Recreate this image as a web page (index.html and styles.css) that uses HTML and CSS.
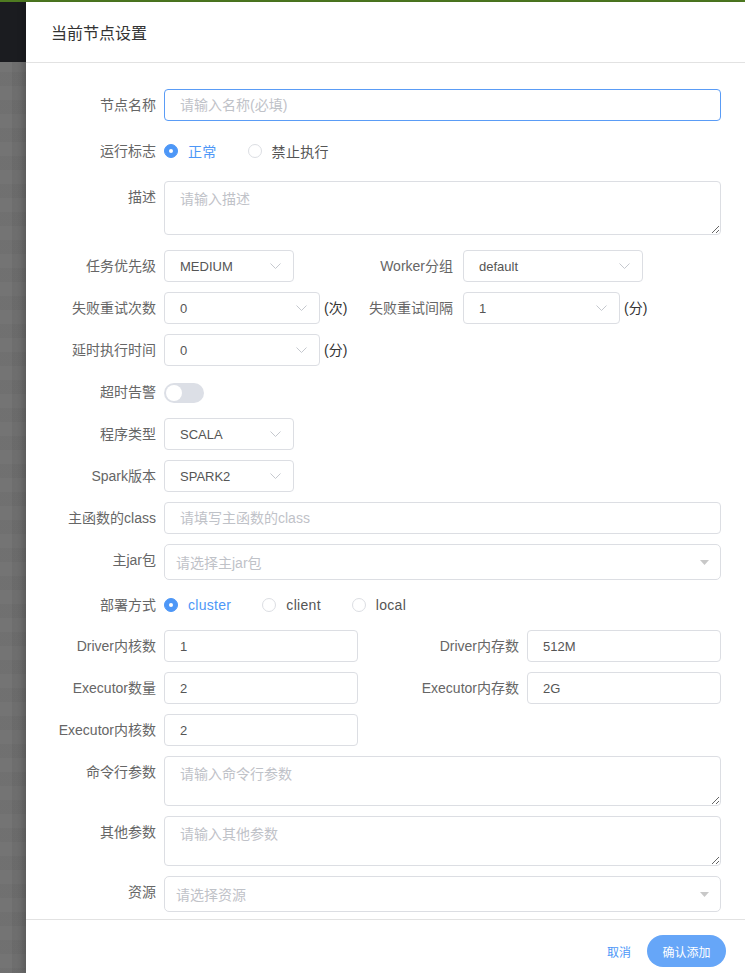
FILE: index.html
```html
<!DOCTYPE html>
<html lang="zh-CN">
<head>
  <meta charset="UTF-8" />
  <title>当前节点设置</title>
  <link rel="stylesheet" href="styles.css">
</head>
<body>
  <div class="top-line"></div>
  <div class="stage">
    <div class="backdrop">
      <div class="nav-strip"></div>
    </div>

    <div class="drawer">
      <div class="drawer-head">
        <h2>当前节点设置</h2>
      </div>

      <div class="drawer-body">
        <div class="form-row">
          <label class="row-label">节点名称</label>
          <input class="field is-focus" type="text" placeholder="请输入名称(必填)">
        </div>

        <div class="form-row row-radio">
          <label class="row-label">运行标志</label>
          <div class="radio-group">
            <span class="radio checked"><i></i>正常</span>
            <span class="radio"><i></i>禁止执行</span>
          </div>
        </div>

        <div class="form-row row-desc">
          <label class="row-label">描述</label>
          <textarea class="field area area-desc" placeholder="请输入描述"></textarea>
        </div>

        <div class="form-row">
          <div class="half">
            <label class="row-label">任务优先级</label>
            <div class="select w130"><span>MEDIUM</span><svg width="11" height="6" viewBox="0 0 11 6"><polyline points="0.5,0.5 5.5,5.5 10.5,0.5" /></svg></div>
          </div>
          <label class="sub-label">Worker分组</label>
          <div class="select w180"><span>default</span><svg width="11" height="6" viewBox="0 0 11 6"><polyline points="0.5,0.5 5.5,5.5 10.5,0.5" /></svg></div>
        </div>

        <div class="form-row">
          <div class="half">
            <label class="row-label">失败重试次数</label>
            <div class="select w156"><span>0</span><svg width="11" height="6" viewBox="0 0 11 6"><polyline points="0.5,0.5 5.5,5.5 10.5,0.5" /></svg></div>
            <span class="unit">(次)</span>
          </div>
          <label class="sub-label">失败重试间隔</label>
          <div class="select w157"><span>1</span><svg width="11" height="6" viewBox="0 0 11 6"><polyline points="0.5,0.5 5.5,5.5 10.5,0.5" /></svg></div>
          <span class="unit">(分)</span>
        </div>

        <div class="form-row">
          <label class="row-label">延时执行时间</label>
          <div class="select w156"><span>0</span><svg width="11" height="6" viewBox="0 0 11 6"><polyline points="0.5,0.5 5.5,5.5 10.5,0.5" /></svg></div>
          <span class="unit">(分)</span>
        </div>

        <div class="form-row">
          <label class="row-label">超时告警</label>
          <span class="switch"><i></i></span>
        </div>

        <div class="form-row">
          <label class="row-label">程序类型</label>
          <div class="select w130"><span>SCALA</span><svg width="11" height="6" viewBox="0 0 11 6"><polyline points="0.5,0.5 5.5,5.5 10.5,0.5" /></svg></div>
        </div>

        <div class="form-row">
          <label class="row-label">Spark版本</label>
          <div class="select w130"><span>SPARK2</span><svg width="11" height="6" viewBox="0 0 11 6"><polyline points="0.5,0.5 5.5,5.5 10.5,0.5" /></svg></div>
        </div>

        <div class="form-row">
          <label class="row-label">主函数的class</label>
          <input class="field" type="text" placeholder="请填写主函数的class">
        </div>

        <div class="form-row">
          <label class="row-label">主jar包</label>
          <div class="tree-select"><span>请选择主jar包</span><svg width="9" height="5" viewBox="0 0 9 5"><polygon points="0,0 9,0 4.5,5" /></svg></div>
        </div>

        <div class="form-row row-radio-sm">
          <label class="row-label">部署方式</label>
          <div class="radio-group">
            <span class="radio checked"><i></i>cluster</span>
            <span class="radio"><i></i>client</span>
            <span class="radio"><i></i>local</span>
          </div>
        </div>

        <div class="form-row">
          <div class="half">
            <label class="row-label">Driver内核数</label>
            <input class="field w194" type="text" value="1">
          </div>
          <label class="sub-label wide">Driver内存数</label>
          <input class="field w194" type="text" value="512M">
        </div>

        <div class="form-row">
          <div class="half">
            <label class="row-label">Executor数量</label>
            <input class="field w194" type="text" value="2">
          </div>
          <label class="sub-label wide">Executor内存数</label>
          <input class="field w194" type="text" value="2G">
        </div>

        <div class="form-row">
          <div class="half">
            <label class="row-label">Executor内核数</label>
            <input class="field w194" type="text" value="2">
          </div>
        </div>

        <div class="form-row">
          <label class="row-label">命令行参数</label>
          <textarea class="field area" placeholder="请输入命令行参数"></textarea>
        </div>

        <div class="form-row">
          <label class="row-label">其他参数</label>
          <textarea class="field area" placeholder="请输入其他参数"></textarea>
        </div>

        <div class="form-row">
          <label class="row-label">资源</label>
          <div class="tree-select"><span>请选择资源</span><svg width="9" height="5" viewBox="0 0 9 5"><polygon points="0,0 9,0 4.5,5" /></svg></div>
        </div>
      </div>

      <div class="drawer-foot">
        <button class="btn-text">取消</button>
        <button class="btn-primary">确认添加</button>
      </div>
    </div>
  </div>
</body>
</html>
```

FILE: styles.css
```css
*, *::before, *::after {
  box-sizing: border-box;
}

html, body {
  margin: 0;
  padding: 0;
  height: 100%;
  overflow: hidden;
  font-family: "Liberation Sans", "Noto Sans CJK SC", sans-serif;
  color: #333;
}

body {
  display: flex;
  flex-direction: column;
}

.top-line {
  height: 2px;
  background: #4f7b21;
  flex-shrink: 0;
}

.stage {
  flex: 1;
  display: flex;
  min-height: 0;
}

/* dimmed page behind the drawer */
.backdrop {
  width: 26px;
  flex-shrink: 0;
  background-color: #747474;
  background-image:
    linear-gradient(90deg, transparent 12px, rgba(0, 0, 0, 0.05) 12px),
    repeating-linear-gradient(180deg, transparent 0 14px, rgba(0, 0, 0, 0.03) 14px 28px);
}

.nav-strip {
  height: 60px;
  background: #1b1c20;
}

.drawer {
  flex: 1;
  display: flex;
  flex-direction: column;
  background: #fff;
  box-shadow: -3px 0 6px rgba(0, 0, 0, 0.18);
  min-width: 0;
}

.drawer-head {
  height: 61px;
  border-bottom: 1px solid #e2e2e2;
  display: flex;
  align-items: center;
  padding-left: 25px;
  flex-shrink: 0;
}

.drawer-head h2 {
  margin: 0;
  font-size: 16px;
  font-weight: normal;
  color: #333;
}

.drawer-body {
  flex: 1;
  overflow: hidden;
  padding: 26px 24px 0 30px;
}

.drawer-foot {
  height: 54px;
  border-top: 1px solid #e2e2e2;
  display: flex;
  justify-content: flex-end;
  align-items: flex-start;
  padding: 15px 19px 0 0;
  gap: 16px;
  flex-shrink: 0;
}

/* form rows */
.form-row {
  display: flex;
  align-items: flex-start;
  margin-bottom: 10px;
}

.row-desc {
  margin-bottom: 15px;
}

.row-radio {
  height: 40px;
  align-items: center;
}

.row-radio-sm {
  height: 30px;
  align-items: center;
}

.row-label {
  width: 108px;
  padding-right: 8px;
  flex-shrink: 0;
  text-align: right;
  font-size: 14px;
  line-height: 32px;
  color: #666;
  white-space: nowrap;
}

.row-radio .row-label,
.row-radio-sm .row-label {
  line-height: 20px;
}

.half {
  width: 304px;
  display: flex;
  align-items: flex-start;
  flex-shrink: 0;
}

.sub-label {
  width: 103px;
  padding-right: 10px;
  text-align: right;
  font-size: 14px;
  line-height: 32px;
  color: #666;
  white-space: nowrap;
  flex-shrink: 0;
}

.sub-label.wide {
  width: auto;
  flex: 1;
  padding-right: 8px;
}

.unit {
  font-size: 14px;
  line-height: 32px;
  color: #333;
  margin-left: 4px;
  white-space: nowrap;
}

/* inputs */
.field {
  flex: 1;
  height: 32px;
  border: 1px solid #dcdee3;
  border-radius: 4px;
  padding: 0 15px;
  font-family: inherit;
  font-size: 13px;
  color: #555;
  background: #fff;
  outline: none;
  min-width: 0;
}

.field::placeholder {
  color: #bfc2c8;
  font-size: 14px;
}

.field.is-focus {
  border-color: #5a9cf6;
}

.field.w194 {
  flex: none;
  width: 194px;
}

.area {
  display: block;
  height: 50px;
  padding: 7px 15px;
  font-size: 14px;
  line-height: 1.5;
  resize: vertical;
}

.area.area-desc {
  height: 54px;
}

/* selects */
.select {
  height: 32px;
  border: 1px solid #dcdee3;
  border-radius: 4px;
  display: flex;
  align-items: center;
  justify-content: space-between;
  padding: 0 12px 0 15px;
  font-size: 13px;
  color: #555;
  flex-shrink: 0;
}

.select svg polyline {
  fill: none;
  stroke: #c5c8ce;
  stroke-width: 1;
}

.w130 { width: 130px; }
.w156 { width: 156px; }
.w157 { width: 157px; }
.w180 { width: 180px; }

.tree-select {
  flex: 1;
  height: 36px;
  border: 1px solid #dcdee3;
  border-radius: 5px;
  display: flex;
  align-items: center;
  justify-content: space-between;
  padding: 0 11px 0 11px;
  font-size: 14px;
  color: #bfc2c8;
}

.tree-select svg polygon {
  fill: #c8c8c8;
}

/* radios */
.radio-group {
  display: flex;
  align-items: center;
}

.radio {
  display: flex;
  align-items: center;
  font-size: 14px;
  letter-spacing: 0.3px;
  color: #555;
  margin-right: 31px;
}

.radio i {
  width: 14px;
  height: 14px;
  border-radius: 50%;
  border: 1px solid #dcdee3;
  background: #fff;
  margin-right: 10px;
  position: relative;
}

.radio.checked {
  color: #4d97f7;
}

.radio.checked i {
  border-color: #4d97f7;
  background: #4d97f7;
}

.radio.checked i::after {
  content: "";
  position: absolute;
  top: 50%;
  left: 50%;
  width: 4px;
  height: 4px;
  border-radius: 50%;
  background: #fff;
  transform: translate(-50%, -50%);
}

/* switch */
.switch {
  margin-top: 7px;
  width: 40px;
  height: 20px;
  border-radius: 10px;
  background: #dcdfe6;
  display: flex;
  align-items: center;
  padding-left: 2px;
}

.switch i {
  width: 16px;
  height: 16px;
  border-radius: 50%;
  background: #fff;
}

/* footer buttons */
.btn-text {
  border: none;
  background: none;
  padding: 0;
  height: 32px;
  font-family: inherit;
  font-size: 12px;
  color: #4d97f7;
  cursor: pointer;
}

.btn-primary {
  width: 79px;
  height: 32px;
  border: none;
  border-radius: 16px;
  background: #66a6f8;
  color: #fff;
  font-family: inherit;
  font-size: 12px;
  cursor: pointer;
}
```
